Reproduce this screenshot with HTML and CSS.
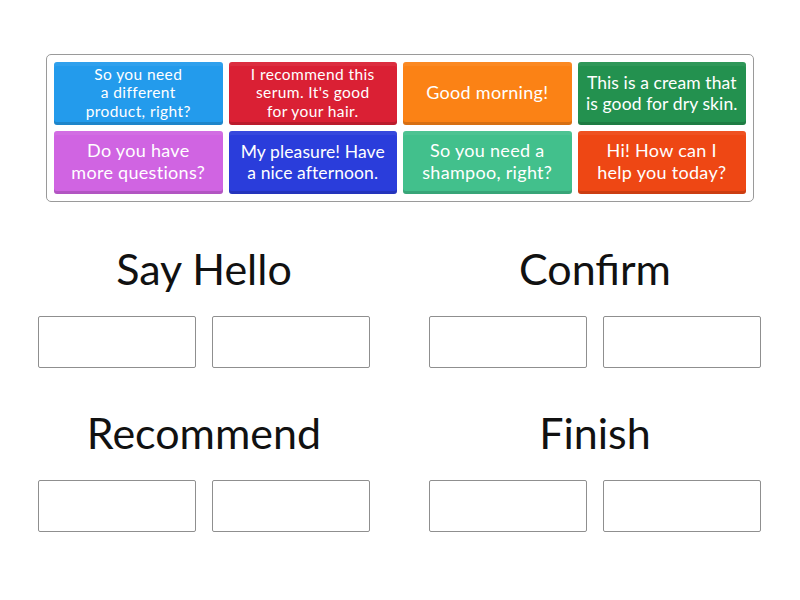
FILE: index.html
```html
<!DOCTYPE html>
<html>
<head>
<meta charset="utf-8">
<link rel="stylesheet" href="styles.css">
</head>
<body>
<div class="bank">
  <div class="tile blue small">So you need<br>a different<br>product, right?</div>
  <div class="tile red small">I recommend this<br>serum. It's good<br>for your hair.</div>
  <div class="tile orange">Good morning!</div>
  <div class="tile green tight">This is a cream that<br>is good for dry skin.</div>
  <div class="tile violet">Do you have<br>more questions?</div>
  <div class="tile navy tight">My pleasure! Have<br>a nice afternoon.</div>
  <div class="tile teal">So you need a<br>shampoo, right?</div>
  <div class="tile tomato">Hi! How can I<br>help you today?</div>
</div>
<div class="groups">
  <div class="group">
    <h2 class="title">Say Hello</h2>
    <div class="slots"><div class="slot"></div><div class="slot"></div></div>
  </div>
  <div class="group">
    <h2 class="title">Confirm</h2>
    <div class="slots"><div class="slot"></div><div class="slot"></div></div>
  </div>
  <div class="group">
    <h2 class="title">Recommend</h2>
    <div class="slots"><div class="slot"></div><div class="slot"></div></div>
  </div>
  <div class="group">
    <h2 class="title">Finish</h2>
    <div class="slots"><div class="slot"></div><div class="slot"></div></div>
  </div>
</div>
</body>
</html>
```
FILE: styles.css
```css
html, body {
  margin: 0;
  padding: 0;
  background: #ffffff;
  font-family: Lato, "Open Sans", sans-serif;
}
.bank {
  box-sizing: border-box;
  width: 708px;
  margin: 54px 0 0 46px;
  border: 1px solid #9a9a9a;
  border-radius: 5px;
  padding: 7px;
  display: grid;
  grid-template-columns: repeat(4, 1fr);
  grid-auto-rows: 63px;
  gap: 6px;
}
.tile {
  display: flex;
  align-items: center;
  justify-content: center;
  text-align: center;
  color: #ffffff;
  font-size: 18px;
  line-height: 21.6px;
  letter-spacing: 0.3px;
  border-radius: 3px;
  box-shadow: inset 0 -3px 0 rgba(0,0,0,0.14), inset 0 4px 0 rgba(255,255,255,0.06);
  padding-bottom: 2px;
  box-sizing: border-box;
  white-space: nowrap;
}
.tile.tight {
  font-size: 17.5px;
  line-height: 21px;
  letter-spacing: 0.1px;
}
.tile.small {
  font-size: 15.5px;
  line-height: 18.6px;
  letter-spacing: 0.4px;
}
.blue { background: #239bec; }
.red { background: #da2034; }
.orange { background: #fb8215; }
.green { background: #23914f; }
.violet { background: #d064e2; }
.navy { background: #2a3ddb; }
.teal { background: #42c08c; }
.tomato { background: #ee4714; }

.groups {
  margin: 41px 39px 0 38px;
  display: grid;
  grid-template-columns: 332px 332px;
  column-gap: 59px;
  row-gap: 39px;
}
.title {
  margin: 0;
  font-weight: 400;
  font-size: 43px;
  line-height: 52px;
  text-align: center;
  color: #111111;
}
.slots {
  margin-top: 21px;
  display: flex;
  justify-content: space-between;
}
.slot {
  box-sizing: border-box;
  width: 158px;
  height: 52px;
  border: 1px solid #8f8f8f;
  border-radius: 2px;
  background: #ffffff;
}
```
